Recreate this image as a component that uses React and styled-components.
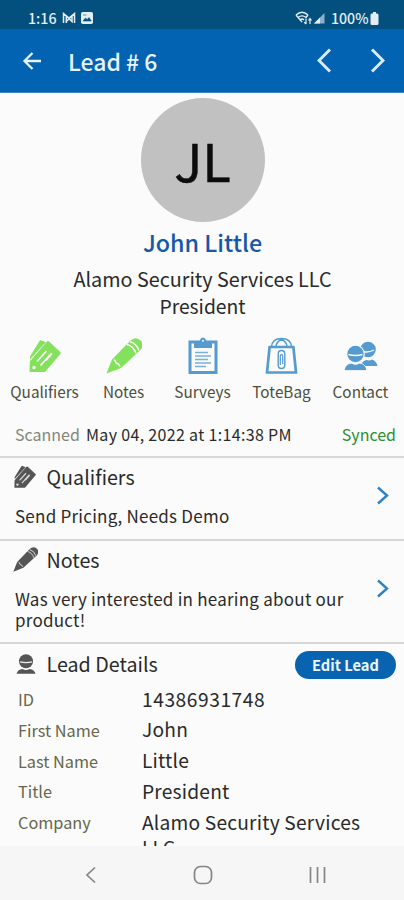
import React from 'react';
import styled, { createGlobalStyle } from 'styled-components';

const Global = createGlobalStyle`
  * { box-sizing: border-box; }
  body { margin: 0; background: #fbfbfb; }
  svg { display: block; flex: none; }
`;

const Screen = styled.div`
  width: 404px;
  height: 900px;
  display: flex;
  flex-direction: column;
  overflow: hidden;
  background: #fbfbfb;
  color: #2a2a2a;
  font-family: 'Noto Sans CJK SC', 'Noto Sans', sans-serif;
  white-space: nowrap;
`;

const StatusBar = styled.header`
  flex: none;
  height: 29px;
  padding: 7px 25px 0 28px;
  display: flex;
  justify-content: space-between;
  align-items: center;
  background: #03507f;
  color: #e3edf4;
  font-size: 14.2px;
  font-weight: 500;
  line-height: 20px;
`;

const StatusGroup = styled.div`
  display: flex;
  align-items: center;
  gap: ${(p) => p.$gap}px;
`;

const Percent = styled.span`
  margin-left: 4px;
`;

const AppBar = styled.nav`
  flex: none;
  height: 64px;
  padding: 0 19px 0 20px;
  display: flex;
  align-items: center;
  background: #0163b1;
  border-bottom: 1px solid #3c83c2;
  color: #e8f3fc;
`;

const AppTitle = styled.h1`
  flex: 1;
  margin: 0 0 0 23px;
  font-size: 23px;
  font-weight: 500;
  line-height: 30px;
`;

const Arrows = styled.div`
  display: flex;
  gap: 38px;
`;

const Content = styled.main`
  flex: 1;
  min-height: 0;
  overflow: hidden;
`;

const Profile = styled.section`
  height: 238px;
  padding: 5px 0 0 1px;
  display: flex;
  flex-direction: column;
  align-items: center;
`;

const Avatar = styled.div`
  width: 124px;
  height: 124px;
  border-radius: 50%;
  background: #c1c1c1;
  color: #0c0c0c;
  font-size: 52.5px;
  line-height: 122px;
  text-align: center;
  -webkit-text-stroke: 0.5px #0c0c0c;
`;

const Name = styled.h2`
  margin: 4px 0 7px;
  color: #1558a8;
  font-size: 23.3px;
  font-weight: 500;
  line-height: 32px;
`;

const Subtitle = styled.div`
  font-size: ${(p) => p.$size || 19.8}px;
  line-height: 27.5px;
`;

const Actions = styled.section`
  height: 79px;
  padding: 0 4px 0 5px;
  display: grid;
  grid-template-columns: repeat(5, 1fr);
`;

const Action = styled.div`
  display: flex;
  flex-direction: column;
  align-items: center;
`;

const ActionIcon = styled.div`
  height: 50px;
  display: flex;
  align-items: center;
`;

const ActionLabel = styled.span`
  color: #4d4f3c;
  font-size: 15.3px;
  line-height: 20px;
`;

const ScanRow = styled.div`
  height: 46px;
  padding: 13px 8px 0 15px;
  display: flex;
  font-size: 16px;
  line-height: 22px;
`;

const Muted = styled.span`
  width: 71px;
  color: #85877a;
`;

const Stamp = styled.span`
  flex: 1;
  letter-spacing: 0.33px;
`;

const Synced = styled.span`
  color: #2a9035;
`;

const Panel = styled.section`
  height: ${(p) => p.$height}px;
  padding: 5px 15px 0 13px;
  display: flex;
  border-top: 2px solid #d7d7d7;
`;

const PanelBody = styled.div`
  flex: 1;
`;

const PanelArrow = styled.div`
  margin-top: ${(p) => p.$top}px;
`;

const PanelTitle = styled.h3`
  margin: 0;
  height: 27px;
  display: flex;
  align-items: center;
  font-size: 19.7px;
  font-weight: 400;
  line-height: 27px;
`;

const TitleIcon = styled.span`
  width: 33.5px;
  padding-left: ${(p) => p.$inset || 0}px;
`;

const PanelText = styled.p`
  margin: 15px 0 0 2px;
  font-size: 17px;
  line-height: 21px;
  letter-spacing: 0.24px;
  white-space: pre-line;
`;

const Details = styled.section`
  padding: 6px 8px 0 13px;
  border-top: 2px solid #d7d7d7;
`;

const DetailsHead = styled.div`
  height: 34px;
  display: flex;
  align-items: flex-start;
  justify-content: space-between;
`;

const EditButton = styled.button`
  width: 101px;
  height: 28px;
  margin-top: 1px;
  padding: 0;
  border: 0;
  border-radius: 14px;
  background: #0864b1;
  color: #eaf5fd;
  font: 700 14.7px/28px 'Noto Sans CJK SC', sans-serif;
`;

const Fields = styled.dl`
  margin: 0;
  padding-left: 5px;
  display: grid;
  grid-template-columns: 124px 1fr;
  grid-auto-rows: 30.8px;
`;

const Label = styled.dt`
  color: #64674c;
  font-size: 16.3px;
  line-height: 31px;
`;

const Value = styled.dd`
  margin: 0;
  padding-top: 2.5px;
  font-size: 19.2px;
  line-height: 25px;
  letter-spacing: ${(p) => (p.$numeric ? 0.55 : 0.2)}px;
  white-space: normal;
`;

const SystemNav = styled.footer`
  flex: none;
  height: 54px;
  padding: 3px 77px 0 85px;
  display: flex;
  align-items: center;
  justify-content: space-between;
  background: #f6f6f6;
`;

const Chevron = ({ w, h, stroke, color, right }) => (
  <svg width={w} height={h} viewBox={`0 0 ${w} ${h}`} fill="none" stroke={color} strokeWidth={stroke}>
    <path d={right ? `M2 1.5 L${w - 2} ${h / 2} L2 ${h - 1.5}` : `M${w - 2} 1.5 L2 ${h / 2} L${w - 2} ${h - 1.5}`} />
  </svg>
);

const TagIcon = ({ size = 32, color = '#83e15c', cut = '#fbfbfb' }) => (
  <svg width={size} height={(size * 34) / 32} viewBox="0 0 32 34">
    <path fill={color} d="M1 17.5 10.5 2q.8-1.2 2-.6l4.3 1.800L1 20.500zM18 2.500q1-.9 2 0L31.300 13q1 1 0 2L16 33H1.400Q.5 33 .5 32l.4-9.700z" />
    <circle cx="5" cy="28.500" r="1.700" fill={cut} />
    <path d="M8 22.500 17.500 12M11.500 26.500 22.500 14.200M16.500 21.800l6.500-7.200" stroke={cut} strokeWidth="1.700" fill="none" />
  </svg>
);

const PencilIcon = ({ size = 36, color = '#83e15c', cut = '#fbfbfb' }) => (
  <svg width={size} height={size} viewBox="0 0 36 36">
    <path fill={color} d="M.5 35.500 6 21.500 24 3q5-5 10-1t.5 10L15 30z" />
    <path d="M8 21.500q1.500 1 2 3.500 3 .5 4 3.500M21 6.500q6.500 1.500 9 9M24 3.800q6.500 1.700 9 8.700" stroke={cut} strokeWidth="1.400" fill="none" />
  </svg>
);

const SurveyIcon = () => (
  <svg width="30" height="38" viewBox="0 0 30 38">
    <path fill="none" stroke="#559bcf" strokeWidth="3" d="M2 5H28V35.500H2z" />
    <path fill="#559bcf" d="M6 11V5h4q1.500 0 2-2 .6-2.500 3-2.500t3 2.500q.5 2 2 2h4v6z" />
    <circle cx="15" cy="3.800" r="1" fill="#fbfbfb" />
    <path stroke="#79b0d8" strokeWidth="1.400" d="M7 15.500h13M7 19h16M7 22.500h13M7 26h16M7 29.500h11" />
  </svg>
);

const ToteIcon = () => (
  <svg width="33" height="38" viewBox="0 0 33 38" fill="none" stroke="#559bcf">
    <path strokeWidth="2.700" d="M4.600 10H28.400L31 35.500H2z" />
    <path strokeWidth="1.500" d="M6.500 10Q7 1.500 16.500 1.500T26.500 10M11 10Q11 4.500 17.500 2M22 10Q22 4.500 15.500 2" />
    <path strokeWidth="1.400" d="M13.200 27V17q0-3.500 3.300-3.500t3.300 3.500v11q0 3.500-3.300 3.500t-3.300-3.500z" />
    <path strokeWidth="1.200" d="M15.300 28V19q0-1.400 1.200-1.400t1.200 1.400v8" />
  </svg>
);

const ContactIcon = () => (
  <svg width="34" height="30" viewBox="0 0 34 30">
    <path fill="#559bcf" d="M17 23.500q2-4 5.500-4.500 3 1 5.500-.5 4.500 1.500 5.500 6.500H17z" />
    <circle cx="24" cy="8.500" r="7.800" fill="#559bcf" />
    <path d="M18 10.500q6.500 1.500 12-1.500" stroke="#fbfbfb" strokeWidth="1.300" fill="none" />
    <circle cx="11.500" cy="13" r="9.300" fill="#fbfbfb" />
    <circle cx="11.500" cy="13" r="8.200" fill="#559bcf" />
    <path d="M4.500 13.500q7 2.200 14 0" fill="none" stroke="#fbfbfb" strokeWidth="1.500" />
    <path d="M0 29.500Q1.500 22.500 7.500 22.200q4 2.500 8 0 6 .3 7.500 7.300z" fill="#559bcf" stroke="#fbfbfb" strokeWidth=".8" />
  </svg>
);

const PersonIcon = () => (
  <svg width="20" height="20" viewBox="0 0 20 20">
    <circle cx="10" cy="7.200" r="7" fill="#555" />
    <path d="M4 7.800q6 1.600 12 0" fill="none" stroke="#eee" strokeWidth="1.300" />
    <path d="M.5 19.800Q1.500 15.500 6.500 15q3.500 2 7 0 5 .5 6 4.800z" fill="#555" />
  </svg>
);

const Arrow = () => (
  <svg width="25" height="24" viewBox="0 0 25 24" fill="none" stroke="currentColor" strokeWidth="2.300">
    <path d="M21 12H5M12.500 4 4.500 12l8 8" />
  </svg>
);

const NIcon = () => (
  <svg width="14" height="12" viewBox="0 0 14 12" fill="none" stroke="currentColor" strokeWidth="1.500">
    <path d="M1.500 11V1.500L7 6l5.500-4.500V11M4.300 11V4L10 9.500V4L4.300 9.500" />
  </svg>
);

const PhotoIcon = () => (
  <svg width="12" height="12" viewBox="0 0 12 12">
    <rect width="12" height="12" rx="1.800" fill="currentColor" />
    <path d="M2 9 4.500 6l1.700 1.500L8 5.500 10.300 9zM2 3h3.500" fill="#03507f" stroke="#03507f" strokeWidth=".6" />
  </svg>
);

const WifiIcon = () => (
  <svg width="18" height="14" viewBox="0 0 18 14" fill="none" stroke="currentColor" strokeWidth="1.400">
    <path d="M1 4Q7 -1.500 13 4M3 6.500q4-3.300 8 0M5 9q2-1.800 4 0M1 4l6 7M13 4l-2.500 3" />
    <path d="M11 7.500v5.500m-1.800-1.800L11 13M15 13V7.500m-1.500 2 1.500-2 1.500 2" strokeWidth="1.200" />
  </svg>
);

const SignalIcon = () => (
  <svg width="11" height="12" viewBox="0 0 11 12">
    <path d="M0 11.500 10.500 1v10.500z" fill="#8db0c8" />
    <path d="M0 11.500 6 5.500v6z" fill="currentColor" />
  </svg>
);

const BatteryIcon = () => (
  <svg width="9" height="13" viewBox="0 0 9 13">
    <path d="M3 0h3v1.500h1.300Q8.500 1.500 8.500 3v8.500Q8.500 13 7 13H2Q.5 13 .5 11.500V3Q.5 1.500 1.700 1.500H3z" fill="currentColor" />
  </svg>
);

const actions = [
  ['Qualifiers', <TagIcon />],
  ['Notes', <PencilIcon />],
  ['Surveys', <SurveyIcon />],
  ['ToteBag', <ToteIcon />],
  ['Contact', <ContactIcon />],
];

const fields = [
  ['ID', '14386931748'],
  ['First Name', 'John'],
  ['Last Name', 'Little'],
  ['Title', 'President'],
  ['Company', 'Alamo Security Services LLC'],
];

export default function App() {
  return (
    <Screen>
      <Global />
      <StatusBar>
        <StatusGroup $gap={5}>
          <span>1:16</span>
          <NIcon />
          <PhotoIcon />
        </StatusGroup>
        <StatusGroup $gap={1.5}>
          <WifiIcon />
          <SignalIcon />
          <Percent>100%</Percent>
          <BatteryIcon />
        </StatusGroup>
      </StatusBar>
      <AppBar>
        <Arrow />
        <AppTitle>Lead # 6</AppTitle>
        <Arrows>
          <Chevron w={15} h={25} stroke={3} color="#d9ebf8" />
          <Chevron w={15} h={25} stroke={3} color="#d9ebf8" right />
        </Arrows>
      </AppBar>
      <Content>
        <Profile>
          <Avatar>JL</Avatar>
          <Name>John Little</Name>
          <Subtitle>Alamo Security Services LLC</Subtitle>
          <Subtitle $size={19.3}>President</Subtitle>
        </Profile>
        <Actions>
          {actions.map(([label, icon]) => (
            <Action key={label}>
              <ActionIcon>{icon}</ActionIcon>
              <ActionLabel>{label}</ActionLabel>
            </Action>
          ))}
        </Actions>
        <ScanRow>
          <Muted>Scanned</Muted>
          <Stamp>May 04, 2022 at 1:14:38 PM</Stamp>
          <Synced>Synced</Synced>
        </ScanRow>
        <Panel $height={83}>
          <PanelBody>
            <PanelTitle>
              <TitleIcon $inset={1}>
                <TagIcon size={22} color="#555" cut="#ddd" />
              </TitleIcon>
              Qualifiers
            </PanelTitle>
            <PanelText>Send Pricing, Needs Demo</PanelText>
          </PanelBody>
          <PanelArrow $top={23}>
            <Chevron w={13} h={19} stroke={2.4} color="#2b82c5" right />
          </PanelArrow>
        </Panel>
        <Panel $height={103}>
          <PanelBody>
            <PanelTitle>
              <TitleIcon>
                <PencilIcon size={25} color="#555" cut="#ddd" />
              </TitleIcon>
              Notes
            </PanelTitle>
            <PanelText>{'Was very interested in hearing about our\nproduct!'}</PanelText>
          </PanelBody>
          <PanelArrow $top={33}>
            <Chevron w={13} h={19} stroke={2.4} color="#2b82c5" right />
          </PanelArrow>
        </Panel>
        <Details>
          <DetailsHead>
            <PanelTitle>
              <TitleIcon $inset={3}>
                <PersonIcon />
              </TitleIcon>
              Lead Details
            </PanelTitle>
            <EditButton>Edit Lead</EditButton>
          </DetailsHead>
          <Fields>
            {fields.map(([label, value]) => (
              <React.Fragment key={label}>
                <Label>{label}</Label>
                <Value $numeric={label === 'ID'}>{value}</Value>
              </React.Fragment>
            ))}
          </Fields>
        </Details>
      </Content>
      <SystemNav>
        <Chevron w={12} h={18} stroke={1.7} color="#858585" />
        <svg width="20" height="20" viewBox="0 0 20 20" fill="none" stroke="#858585" strokeWidth="1.700">
          <rect x="1.500" y="1.500" width="17" height="17" rx="6" />
        </svg>
        <svg width="18" height="18" viewBox="0 0 18 18" stroke="#858585" strokeWidth="1.700">
          <path d="M1.500 1v16M8.500 1v16M15.500 1v16" />
        </svg>
      </SystemNav>
    </Screen>
  );
}
